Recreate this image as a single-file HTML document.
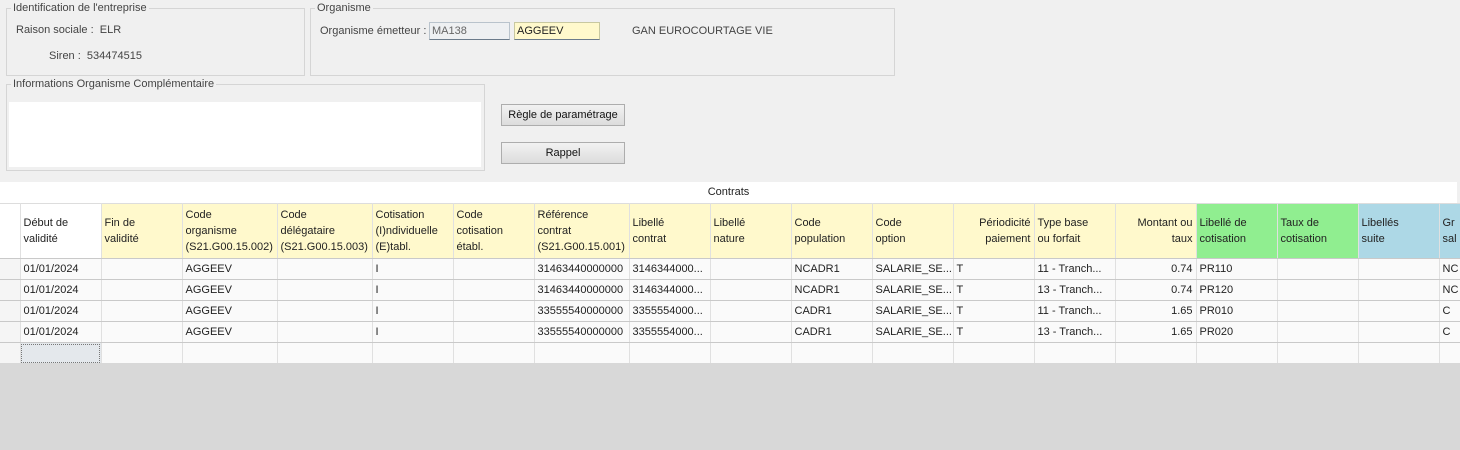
<!DOCTYPE html>
<html><head><meta charset="utf-8"><style>
body{margin:0;width:1460px;height:450px;background:#f0f0f0;font-family:"Liberation Sans",sans-serif;font-size:11px;color:#222;position:relative;overflow:hidden}
.a{position:absolute}
fieldset{position:absolute;border:1px solid #d5d5d5;margin:0;padding:0;box-sizing:border-box}
legend{font-size:11px;color:#444;padding:0 2px;margin-left:4px;line-height:12px}
.btn{position:absolute;background:linear-gradient(#f2f2f2,#dcdcdc);border:1px solid #adadad;box-sizing:border-box;text-align:center;line-height:20px;color:#111}
.grid{position:absolute;left:0;top:182px;width:1457px;height:181px;background:#fff}
table{position:absolute;left:0;top:21px;border-collapse:collapse;table-layout:fixed;width:1457px}
td{border-right:1px solid #e0e0e0;border-bottom:1px solid #c9c9c9;padding:0 3px;overflow:hidden;white-space:nowrap;height:21px;box-sizing:border-box;line-height:13px;vertical-align:middle;background:#fafafa}
tr.h td{height:55px;white-space:normal;background:#fff9cc;vertical-align:middle;border-top:1px solid #ddd;line-height:16px}
tr.h td.w{background:#fff}
tr.h td.g{background:#90ee90}
tr.h td.b{background:#add8e6}
tr.h td.r,td.r{text-align:right}
td.rh{background:#f5f5f5}
</style></head><body>
<fieldset style="left:6px;top:2px;width:299px;height:74px"><legend>Identification de l'entreprise</legend></fieldset>
<div class="a" style="left:16px;top:24px;color:#444">Raison sociale :&nbsp; ELR</div>
<div class="a" style="left:49px;top:50px;color:#444">Siren :&nbsp; 534474515</div>
<fieldset style="left:310px;top:2px;width:585px;height:74px"><legend>Organisme</legend></fieldset>
<div class="a" style="left:320px;top:25px;color:#444">Organisme émetteur :</div>
<div class="a" style="left:429px;top:22px;width:81px;height:18px;box-sizing:border-box;background:#eef0f2;border:1px solid #b9c3cc;border-bottom-color:#6b7b8b;padding-left:2px;line-height:16px;color:#666">MA138</div>
<div class="a" style="left:514px;top:22px;width:86px;height:18px;box-sizing:border-box;background:#fff9cc;border:1px solid #c8c8a0;border-bottom-color:#6b7b8b;padding-left:2px;line-height:16px">AGGEEV</div>
<div class="a" style="left:632px;top:25px;color:#444">GAN EUROCOURTAGE VIE</div>
<fieldset style="left:6px;top:78px;width:479px;height:93px"><legend>Informations Organisme Complémentaire</legend></fieldset>
<div class="a" style="left:9px;top:102px;width:472px;height:65px;background:#fff"></div>
<div class="btn" style="left:501px;top:104px;width:124px;height:22px">Règle de paramétrage</div>
<div class="btn" style="left:501px;top:142px;width:124px;height:22px">Rappel</div>
<div class="grid">
<div class="a" style="left:0;top:4px;width:1457px;text-align:center;color:#222">Contrats</div>
<table>
<colgroup><col style="width:20px"><col style="width:81px"><col style="width:81px"><col style="width:95px"><col style="width:95px"><col style="width:81px"><col style="width:81px"><col style="width:95px"><col style="width:81px"><col style="width:81px"><col style="width:81px"><col style="width:81px"><col style="width:81px"><col style="width:81px"><col style="width:81px"><col style="width:81px"><col style="width:81px"><col style="width:81px"><col style="width:81px"><col style="width:18px"></colgroup>
<tr class="h"><td class="w"></td><td class="w">Début de<br>validité</td><td>Fin de<br>validité</td><td>Code<br>organisme<br>(S21.G00.15.002)</td><td>Code<br>délégataire<br>(S21.G00.15.003)</td><td>Cotisation<br>(I)ndividuelle<br>(E)tabl.</td><td>Code<br>cotisation<br>établ.</td><td>Référence<br>contrat<br>(S21.G00.15.001)</td><td>Libellé<br>contrat</td><td>Libellé<br>nature</td><td>Code<br>population</td><td>Code<br>option</td><td class="r">Périodicité<br>paiement</td><td>Type base<br>ou forfait</td><td class="r">Montant ou<br>taux</td><td class="g">Libellé de<br>cotisation</td><td class="g">Taux de<br>cotisation</td><td class="b">Libellés<br>suite</td><td class="b">Gr<br>sal</td></tr>
<tr><td class="rh"></td><td>01/01/2024</td><td></td><td>AGGEEV</td><td></td><td>I</td><td></td><td>31463440000000</td><td>3146344000...</td><td></td><td>NCADR1</td><td>SALARIE_SE...</td><td>T</td><td>11 - Tranch...</td><td class="r">0.74</td><td>PR110</td><td></td><td></td><td>NC</td></tr>
<tr><td class="rh"></td><td>01/01/2024</td><td></td><td>AGGEEV</td><td></td><td>I</td><td></td><td>31463440000000</td><td>3146344000...</td><td></td><td>NCADR1</td><td>SALARIE_SE...</td><td>T</td><td>13 - Tranch...</td><td class="r">0.74</td><td>PR120</td><td></td><td></td><td>NC</td></tr>
<tr><td class="rh"></td><td>01/01/2024</td><td></td><td>AGGEEV</td><td></td><td>I</td><td></td><td>33555540000000</td><td>3355554000...</td><td></td><td>CADR1</td><td>SALARIE_SE...</td><td>T</td><td>11 - Tranch...</td><td class="r">1.65</td><td>PR010</td><td></td><td></td><td>C</td></tr>
<tr><td class="rh"></td><td>01/01/2024</td><td></td><td>AGGEEV</td><td></td><td>I</td><td></td><td>33555540000000</td><td>3355554000...</td><td></td><td>CADR1</td><td>SALARIE_SE...</td><td>T</td><td>13 - Tranch...</td><td class="r">1.65</td><td>PR020</td><td></td><td></td><td>C</td></tr>
<tr><td class="rh"></td><td style="background:#e4e8ec;outline:1px dotted #777;outline-offset:-2px"></td><td></td><td></td><td></td><td></td><td></td><td></td><td></td><td></td><td></td><td></td><td></td><td></td><td></td><td></td><td></td><td></td><td></td></tr>
</table>
</div>
<div class="a" style="left:0;top:363px;width:1460px;height:87px;background:#d8d8d8"></div>
</body></html>
